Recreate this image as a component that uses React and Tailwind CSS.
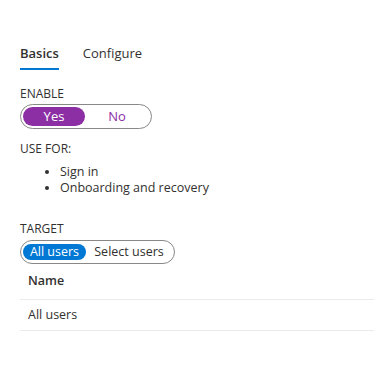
export default function App() {
  return (
    <div className="w-[374px] h-[367px] bg-white text-[#323130] pl-5 pt-[43px]" style={{ fontFamily: '"Open Sans", "Noto Sans", sans-serif' }}>
      <div className="flex gap-6 text-[13px] leading-[20px]">
        <div className="flex flex-col">
          <span className="font-semibold">Basics</span>
          <span className="mt-[5px] h-[2px] bg-[#0078d4]" />
        </div>
        <span>Configure</span>
      </div>

      <div className="mt-[17px] text-[12px] leading-[14px]">ENABLE</div>
      <div className="mt-[3px] flex w-[132px] h-[25px] items-center rounded-full border border-[#8a8886] p-[2px] text-[13px]">
        <span className="flex h-[19px] w-[62px] items-center justify-center rounded-full bg-[#8c2ea4] text-white">Yes</span>
        <span className="flex-1 text-center text-[#8c2ea4]">No</span>
      </div>

      <div className="mt-[13px] text-[12px] leading-[14px]">USE FOR:</div>
      <ul className="mt-[8px] list-disc pl-[40px] text-[12.5px] leading-[16px]">
        <li>Sign in</li>
        <li>Onboarding and recovery</li>
      </ul>

      <div className="mt-[26px] text-[12px] leading-[14px]">TARGET</div>
      <div className="mt-[4px] flex w-[155px] h-[24px] items-center rounded-full border border-[#8a8886] px-[2px] text-[12.5px]">
        <span className="flex h-[16px] w-[63px] items-center justify-center rounded-full bg-[#0078d4] text-white">All users</span>
        <span className="flex-1 text-center">Select users</span>
      </div>

      <div>
        <div className="h-[36px] flex items-center px-[8px] border-b border-[#edebe9] text-[12.5px] font-semibold">Name</div>
        <div className="h-[31px] flex items-center px-[8px] border-b border-[#edebe9] text-[12.5px]">All users</div>
      </div>
    </div>
  );
}
